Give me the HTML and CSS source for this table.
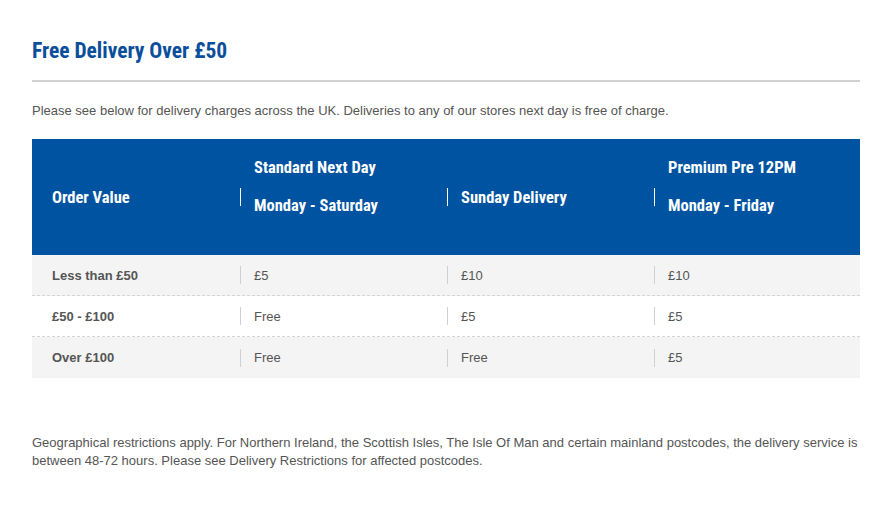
FILE: index.html
```html
<!DOCTYPE html>
<html>
<head>
<meta charset="utf-8">
<link rel="stylesheet" href="styles.css">
</head>
<body>
<div class="page">
  <h1 class="title">Free Delivery Over £50</h1>
  <hr class="rule">
  <p class="intro">Please see below for delivery charges across the UK. Deliveries to any of our stores next day is free of charge.</p>
  <div class="table">
    <div class="row head">
      <div class="cell first"><div class="txt">Order Value</div></div>
      <div class="cell"><span class="sep"></span><div class="txt two"><span>Standard Next Day</span><span>Monday - Saturday</span></div></div>
      <div class="cell"><span class="sep"></span><div class="txt">Sunday Delivery</div></div>
      <div class="cell"><span class="sep"></span><div class="txt two"><span>Premium Pre 12PM</span><span>Monday - Friday</span></div></div>
    </div>
    <div class="row body grey">
      <div class="cell first"><div class="txt">Less than £50</div></div>
      <div class="cell"><span class="sep"></span><div class="txt">£5</div></div>
      <div class="cell"><span class="sep"></span><div class="txt">£10</div></div>
      <div class="cell"><span class="sep"></span><div class="txt">£10</div></div>
    </div>
    <div class="row body">
      <div class="cell first"><div class="txt">£50 - £100</div></div>
      <div class="cell"><span class="sep"></span><div class="txt">Free</div></div>
      <div class="cell"><span class="sep"></span><div class="txt">£5</div></div>
      <div class="cell"><span class="sep"></span><div class="txt">£5</div></div>
    </div>
    <div class="row body grey last">
      <div class="cell first"><div class="txt">Over £100</div></div>
      <div class="cell"><span class="sep"></span><div class="txt">Free</div></div>
      <div class="cell"><span class="sep"></span><div class="txt">Free</div></div>
      <div class="cell"><span class="sep"></span><div class="txt">£5</div></div>
    </div>
  </div>
  <p class="note">Geographical restrictions apply. For Northern Ireland, the Scottish Isles, The Isle Of Man and certain mainland postcodes, the delivery service is between 48-72 hours. Please see Delivery Restrictions for affected postcodes.</p>
</div>
</body>
</html>
```
FILE: styles.css
```css
html, body {
  margin: 0;
  padding: 0;
  background: #ffffff;
}
.page {
  padding: 37px 30px 0 32px;
  font-family: "Liberation Sans", Arial, sans-serif;
  color: #555555;
}
.title {
  margin: 0;
  font-family: "Liberation Sans Narrow", "Roboto Condensed", "Liberation Sans", sans-serif;
  font-stretch: condensed;
  font-weight: bold;
  font-size: 21.5px;
  line-height: 28px;
  color: #0b4f9c;
}
.rule {
  margin: 15px 0 0 0;
  border: 0;
  height: 2px;
  background: #d0d0d0;
}
.intro {
  margin: 20px 0 0 0;
  font-size: 13px;
  line-height: 18px;
}
.table {
  margin-top: 19px;
}
.row {
  display: grid;
  grid-template-columns: 208px 207px 207px 206px;
}
.head {
  background: #0053a1;
  height: 116px;
  color: #ffffff;
  font-family: "Liberation Sans Narrow", "Roboto Condensed", "Liberation Sans", sans-serif;
  font-stretch: condensed;
  font-weight: bold;
  font-size: 16.5px;
}
.cell {
  display: flex;
  align-items: center;
}
.first {
  padding-left: 20px;
}
.sep {
  width: 1px;
  height: 18px;
  background: #ffffff;
  margin-right: 13px;
}
.two {
  display: flex;
  flex-direction: column;
  gap: 20px;
  line-height: 18px;
  margin-bottom: 20px;
}
.body {
  height: 40px;
  border-bottom: 1px dashed #d4d4d4;
  font-size: 13px;
  background: #ffffff;
}
.body.grey {
  background: #f4f4f4;
}
.body.last {
  border-bottom: 0;
  height: 41px;
}
.body .first {
  font-weight: bold;
}
.body .sep {
  background: #d0d0d0;
}
.note {
  margin: 56px 0 0 0;
  font-size: 13px;
  line-height: 18px;
}
```
